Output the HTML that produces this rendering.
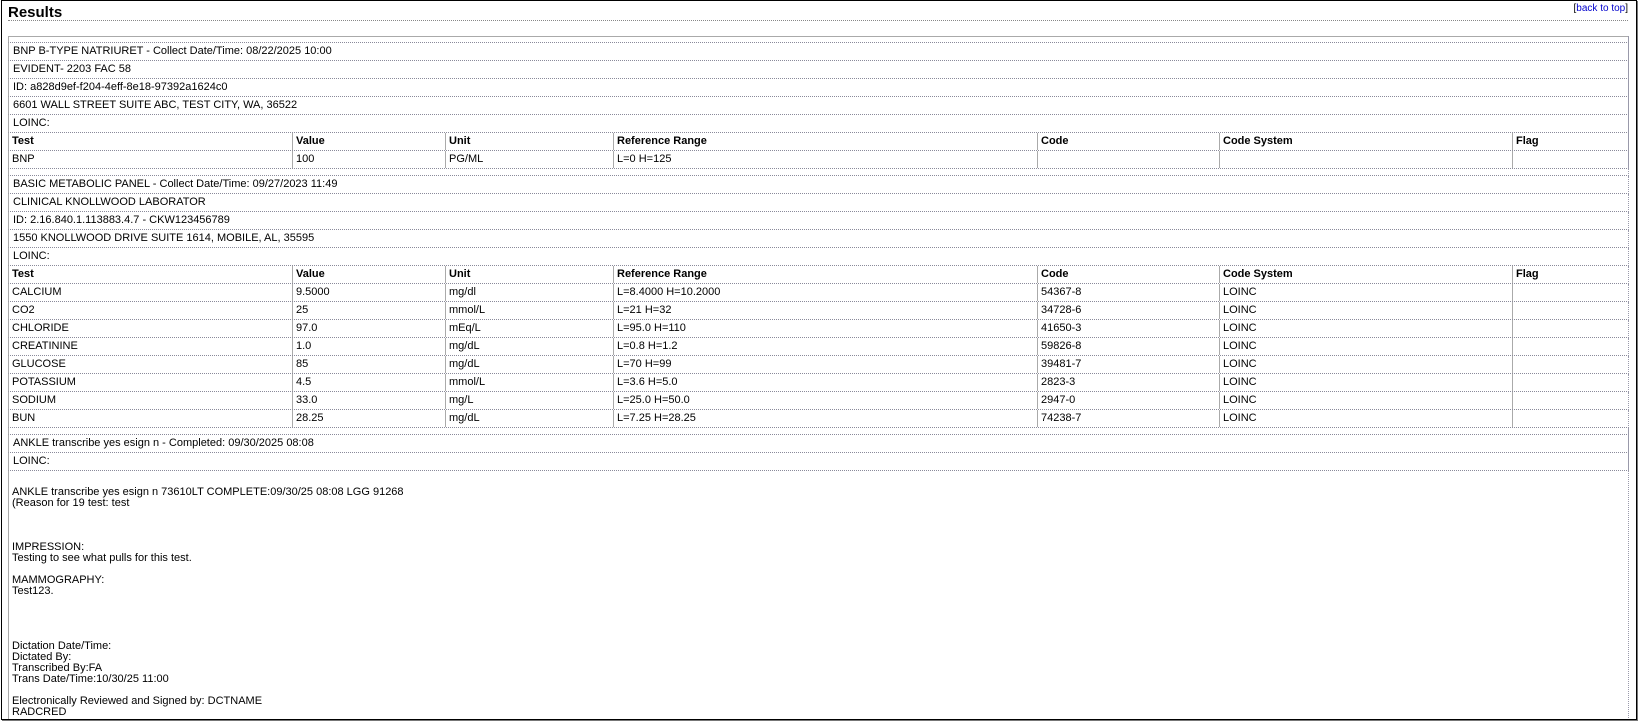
<!DOCTYPE html>
<html><head><meta charset="utf-8"><style>
*{margin:0;padding:0;box-sizing:border-box}
body{width:1641px;height:725px;background:#fff;font-family:"Liberation Sans",Arial,sans-serif;font-size:11px;color:#000;position:relative;overflow:hidden}
#frame{position:absolute;left:1px;top:0;width:1636px;height:720px;border:1px solid #000;box-shadow:1px 1px 0 #777;overflow:hidden}
.a{position:absolute}
.h1{left:6px;top:3px;font-size:15px;font-weight:bold}
.btt{right:8px;top:2px;font-size:10px}
.btt a{color:#00c;text-decoration:none}
.dl{left:6px;width:1620px;height:0;border-top:1px dotted #888}
.r{position:absolute;left:6px;width:1621px;height:18px;border-bottom:1px dotted #8a8a9a;border-left:1px solid #aaa;border-right:1px dotted #99a;line-height:17px;padding-left:4px;white-space:nowrap}
.c{position:absolute;top:0;height:17px;padding-left:3px;border-left:1px solid #aaa}
.c0{left:0;border-left:none;padding-left:3px}
.b{font-weight:bold}
.txt{position:absolute;left:10px;top:486px;line-height:11px;font-size:11px;white-space:pre}
</style></head><body>
<div id="frame">
<div class="a h1">Results</div>
<div class="a btt">[<a>back to top</a>]</div>
<div class="a dl" style="top:19px"></div>
<div class="a" style="left:6px;top:35px;width:1621px;height:686px;border-top:1px solid #aaa;border-left:1px solid #aaa;border-right:1px dotted #99a"></div>
<div class="r" style="top:35px;height:7px"></div>
<div class="r" style="top:42px">BNP B-TYPE NATRIURET - Collect Date/Time: 08/22/2025 10:00</div>
<div class="r" style="top:60px">EVIDENT- 2203 FAC 58</div>
<div class="r" style="top:78px">ID: a828d9ef-f204-4eff-8e18-97392a1624c0</div>
<div class="r" style="top:96px">6601 WALL STREET SUITE ABC, TEST CITY, WA, 36522</div>
<div class="r" style="top:114px">LOINC:</div>
<div class="r b" style="top:132px;padding:0"><div class="c c0">Test</div><div class="c" style="left:283px">Value</div><div class="c" style="left:436px">Unit</div><div class="c" style="left:604px">Reference Range</div><div class="c" style="left:1028px">Code</div><div class="c" style="left:1210px">Code System</div><div class="c" style="left:1503px">Flag</div></div>
<div class="r" style="top:150px;padding:0"><div class="c c0">BNP</div><div class="c" style="left:283px">100</div><div class="c" style="left:436px">PG/ML</div><div class="c" style="left:604px">L=0 H=125</div><div class="c" style="left:1028px"></div><div class="c" style="left:1210px"></div><div class="c" style="left:1503px"></div></div>
<div class="r" style="top:168px;height:7px"></div>
<div class="r" style="top:175px">BASIC METABOLIC PANEL - Collect Date/Time: 09/27/2023 11:49</div>
<div class="r" style="top:193px">CLINICAL KNOLLWOOD LABORATOR</div>
<div class="r" style="top:211px">ID: 2.16.840.1.113883.4.7 - CKW123456789</div>
<div class="r" style="top:229px">1550 KNOLLWOOD DRIVE SUITE 1614, MOBILE, AL, 35595</div>
<div class="r" style="top:247px">LOINC:</div>
<div class="r b" style="top:265px;padding:0"><div class="c c0">Test</div><div class="c" style="left:283px">Value</div><div class="c" style="left:436px">Unit</div><div class="c" style="left:604px">Reference Range</div><div class="c" style="left:1028px">Code</div><div class="c" style="left:1210px">Code System</div><div class="c" style="left:1503px">Flag</div></div>
<div class="r" style="top:283px;padding:0"><div class="c c0">CALCIUM</div><div class="c" style="left:283px">9.5000</div><div class="c" style="left:436px">mg/dl</div><div class="c" style="left:604px">L=8.4000 H=10.2000</div><div class="c" style="left:1028px">54367-8</div><div class="c" style="left:1210px">LOINC</div><div class="c" style="left:1503px"></div></div>
<div class="r" style="top:301px;padding:0"><div class="c c0">CO2</div><div class="c" style="left:283px">25</div><div class="c" style="left:436px">mmol/L</div><div class="c" style="left:604px">L=21 H=32</div><div class="c" style="left:1028px">34728-6</div><div class="c" style="left:1210px">LOINC</div><div class="c" style="left:1503px"></div></div>
<div class="r" style="top:319px;padding:0"><div class="c c0">CHLORIDE</div><div class="c" style="left:283px">97.0</div><div class="c" style="left:436px">mEq/L</div><div class="c" style="left:604px">L=95.0 H=110</div><div class="c" style="left:1028px">41650-3</div><div class="c" style="left:1210px">LOINC</div><div class="c" style="left:1503px"></div></div>
<div class="r" style="top:337px;padding:0"><div class="c c0">CREATININE</div><div class="c" style="left:283px">1.0</div><div class="c" style="left:436px">mg/dL</div><div class="c" style="left:604px">L=0.8 H=1.2</div><div class="c" style="left:1028px">59826-8</div><div class="c" style="left:1210px">LOINC</div><div class="c" style="left:1503px"></div></div>
<div class="r" style="top:355px;padding:0"><div class="c c0">GLUCOSE</div><div class="c" style="left:283px">85</div><div class="c" style="left:436px">mg/dL</div><div class="c" style="left:604px">L=70 H=99</div><div class="c" style="left:1028px">39481-7</div><div class="c" style="left:1210px">LOINC</div><div class="c" style="left:1503px"></div></div>
<div class="r" style="top:373px;padding:0"><div class="c c0">POTASSIUM</div><div class="c" style="left:283px">4.5</div><div class="c" style="left:436px">mmol/L</div><div class="c" style="left:604px">L=3.6 H=5.0</div><div class="c" style="left:1028px">2823-3</div><div class="c" style="left:1210px">LOINC</div><div class="c" style="left:1503px"></div></div>
<div class="r" style="top:391px;padding:0"><div class="c c0">SODIUM</div><div class="c" style="left:283px">33.0</div><div class="c" style="left:436px">mg/L</div><div class="c" style="left:604px">L=25.0 H=50.0</div><div class="c" style="left:1028px">2947-0</div><div class="c" style="left:1210px">LOINC</div><div class="c" style="left:1503px"></div></div>
<div class="r" style="top:409px;padding:0"><div class="c c0">BUN</div><div class="c" style="left:283px">28.25</div><div class="c" style="left:436px">mg/dL</div><div class="c" style="left:604px">L=7.25 H=28.25</div><div class="c" style="left:1028px">74238-7</div><div class="c" style="left:1210px">LOINC</div><div class="c" style="left:1503px"></div></div>
<div class="r" style="top:427px;height:7px"></div>
<div class="r" style="top:434px">ANKLE transcribe yes esign n - Completed: 09/30/2025 08:08</div>
<div class="r" style="top:452px">LOINC:</div>
<div class="txt">ANKLE transcribe yes esign n 73610LT COMPLETE:09/30/25 08:08 LGG 91268
(Reason for 19 test: test



IMPRESSION:
Testing to see what pulls for this test.

MAMMOGRAPHY:
Test123.




Dictation Date/Time:
Dictated By:
Transcribed By:FA
Trans Date/Time:10/30/25 11:00

Electronically Reviewed and Signed by: DCTNAME
RADCRED</div>
</div>
</body></html>
